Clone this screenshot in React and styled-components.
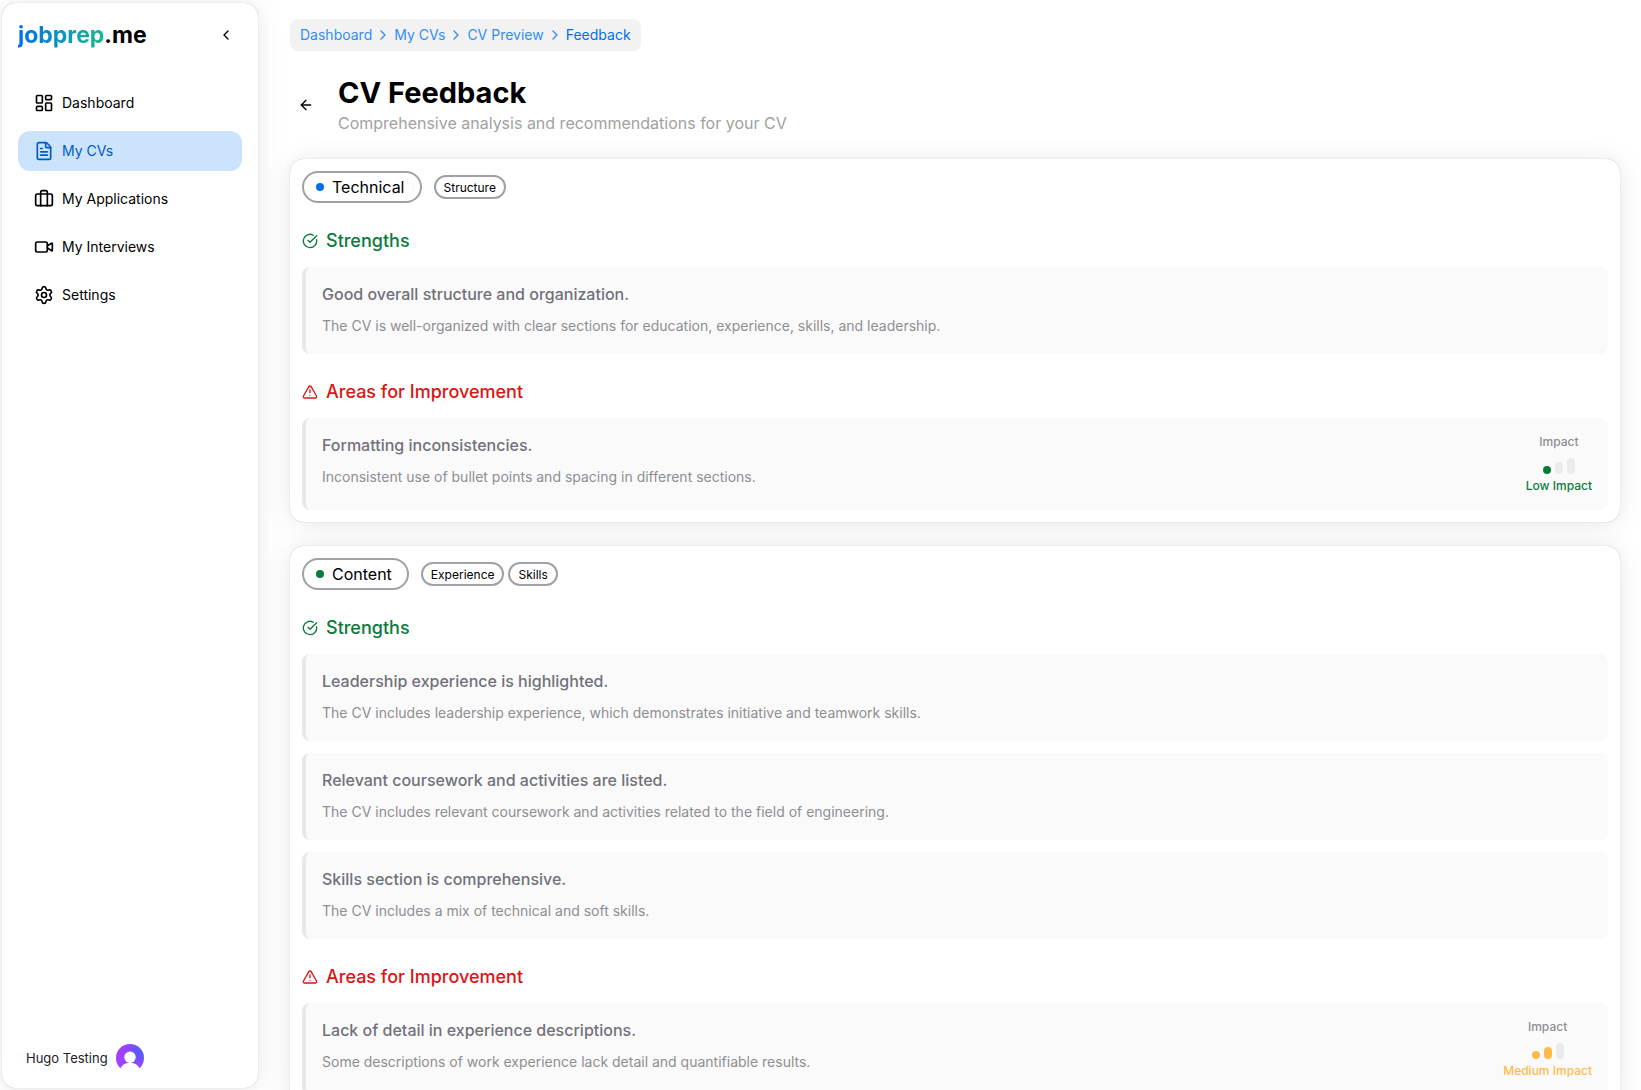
import React, { useState } from 'react'
import styled, { createGlobalStyle } from 'styled-components'
import {
    ArrowLeft,
    Briefcase,
    ChevronLeft,
    ChevronRight,
    CircleCheckBig,
    FileText,
    LayoutDashboard,
    Settings,
    TriangleAlert,
    Video,
} from 'lucide-react'

const navItems = [
    { label: 'Dashboard', icon: LayoutDashboard },
    { label: 'My CVs', icon: FileText },
    { label: 'My Applications', icon: Briefcase },
    { label: 'My Interviews', icon: Video },
    { label: 'Settings', icon: Settings },
]

const crumbs = ['Dashboard', 'My CVs', 'CV Preview', 'Feedback']

const impacts = {
    low: { label: 'Low Impact', level: 1, color: '#0b7a3b' },
    medium: { label: 'Medium Impact', level: 2, color: '#ffba4d' },
}

const feedback = [
    {
        category: 'Technical',
        dot: '#006fee',
        tags: ['Structure'],
        strengths: [
            {
                title: 'Good overall structure and organization.',
                text: 'The CV is well-organized with clear sections for education, experience, skills, and leadership.',
            },
        ],
        improvements: [
            {
                title: 'Formatting inconsistencies.',
                text: 'Inconsistent use of bullet points and spacing in different sections.',
                impact: 'low',
            },
        ],
    },
    {
        category: 'Content',
        dot: '#0b7a3b',
        tags: ['Experience', 'Skills'],
        strengths: [
            {
                title: 'Leadership experience is highlighted.',
                text: 'The CV includes leadership experience, which demonstrates initiative and teamwork skills.',
            },
            {
                title: 'Relevant coursework and activities are listed.',
                text: 'The CV includes relevant coursework and activities related to the field of engineering.',
            },
            {
                title: 'Skills section is comprehensive.',
                text: 'The CV includes a mix of technical and soft skills.',
            },
        ],
        improvements: [
            {
                title: 'Lack of detail in experience descriptions.',
                text: 'Some descriptions of work experience lack detail and quantifiable results.',
                impact: 'medium',
            },
        ],
    },
]

function Avatar() {
    return (
        <svg width="28" height="28" viewBox="0 0 28 28" aria-hidden="true">
            <defs>
                <radialGradient id="avatarFill" cx="0.85" cy="0.3" r="0.55">
                    <stop offset="0" stopColor="#4f5dff" />
                    <stop offset="1" stopColor="#a041ff" />
                </radialGradient>
            </defs>
            <circle cx="14" cy="14" r="14" fill="url(#avatarFill)" />
            <circle cx="14" cy="13.3" r="5.7" fill="#fff" />
            {/* shoulders run past the bottom edge and cut the disc open */}
            <circle cx="14" cy="30" r="11.3" fill="#fff" />
        </svg>
    )
}

function Sidebar() {
    const [active, setActive] = useState('My CVs')

    return (
        <SidebarContainer>
            <SidebarHeader>
                <Logo href="#"><span>jobprep</span>.me</Logo>
                <IconButton aria-label="Collapse sidebar">
                    <ChevronLeft size={16} />
                </IconButton>
            </SidebarHeader>
            <Nav>
                {navItems.map(({ label, icon: Icon }) => (
                    <NavLink
                        key={label}
                        href="#"
                        $active={label === active}
                        onClick={() => setActive(label)}
                    >
                        <Icon size={20} />
                        <span>{label}</span>
                    </NavLink>
                ))}
            </Nav>
            <UserButton>
                Hugo Testing
                <Avatar />
            </UserButton>
        </SidebarContainer>
    )
}

function Impact({ type }) {
    const { label, level, color } = impacts[type]

    return (
        <ImpactContainer>
            <ImpactLabel>Impact</ImpactLabel>
            <Bars>
                <Bar $height={8} $color={level > 0 && color} />
                <Bar $height={12} $color={level > 1 && color} />
                <Bar $height={16} $color={level > 2 && color} />
            </Bars>
            <ImpactLabel $color={color}>{label}</ImpactLabel>
        </ImpactContainer>
    )
}

function FeedbackItem({ item }) {
    return (
        <Item>
            <div>
                <ItemTitle>{item.title}</ItemTitle>
                <ItemText>{item.text}</ItemText>
            </div>
            {item.impact && <Impact type={item.impact} />}
        </Item>
    )
}

function FeedbackCard({ data }) {
    return (
        <Card>
            <CardHeader>
                <CategoryChip>
                    <Dot $color={data.dot} />
                    {data.category}
                </CategoryChip>
                <Tags>
                    {data.tags.map(tag => <Tag key={tag}>{tag}</Tag>)}
                </Tags>
            </CardHeader>
            <Group>
                <GroupTitle $color="#0b7a3b">
                    <CircleCheckBig size={16} />
                    Strengths
                </GroupTitle>
                {data.strengths.map(item => <FeedbackItem key={item.title} item={item} />)}
            </Group>
            <Group>
                <GroupTitle $color="#dc1414">
                    <TriangleAlert size={16} />
                    Areas for Improvement
                </GroupTitle>
                {data.improvements.map(item => <FeedbackItem key={item.title} item={item} />)}
            </Group>
        </Card>
    )
}

function App() {
    return (
        <>
            <GlobalStyle />
            <Layout>
                <Sidebar />
                <Main>
                    <Breadcrumbs aria-label="Breadcrumbs">
                        {crumbs.map((crumb, i) => (
                            <React.Fragment key={crumb}>
                                {i > 0 && <ChevronRight size={16} />}
                                <Crumb href="#" $current={i === crumbs.length - 1}>{crumb}</Crumb>
                            </React.Fragment>
                        ))}
                    </Breadcrumbs>
                    <PageHeader>
                        <IconButton aria-label="Go back">
                            <ArrowLeft size={16} />
                        </IconButton>
                        <div>
                            <Title>CV Feedback</Title>
                            <Subtitle>Comprehensive analysis and recommendations for your CV</Subtitle>
                        </div>
                    </PageHeader>
                    {feedback.map(data => <FeedbackCard key={data.category} data={data} />)}
                </Main>
            </Layout>
        </>
    )
}

export default App

const GlobalStyle = createGlobalStyle`
    *{
        box-sizing:border-box;
        margin:0;
        padding:0;
    }
    body{
        font-family:Inter, "Liberation Sans", sans-serif;
        color:#11181c;
        background-color:#fff;
    }
    button{
        font-family:inherit;
        color:inherit;
        border:none;
        background:transparent;
        cursor:pointer;
    }
    a{
        color:inherit;
        text-decoration:none;
    }
    svg{
        flex-shrink:0;
    }
`;

const panelShadow = '0 0 15px rgba(0,0,0,0.03), 0 2px 30px rgba(0,0,0,0.08), 0 0 1px rgba(0,0,0,0.3)'

const Layout = styled.div`
    display:flex;
    height:100vh;
    overflow:hidden;
`;
const SidebarContainer = styled.aside`
    display:flex;
    flex-direction:column;
    flex-shrink:0;
    width:256px;
    margin:3px 0 2px 2px;
    padding:16px;
    border-radius:14px;
    background-color:#fff;
    box-shadow:${panelShadow};
`;
const SidebarHeader = styled.div`
    display:flex;
    align-items:center;
    justify-content:space-between;
    height:32px;
`;
const Logo = styled.a`
    font-size:23px;
    line-height:32px;
    font-weight:700;
    color:#000;
    >span{
        color:transparent;
        background:linear-gradient(to right, #006fee, #17b890);
        background-clip:text;
    }
`;
const IconButton = styled.button`
    display:flex;
    align-items:center;
    justify-content:center;
    width:32px;
    height:32px;
    border-radius:8px;
    color:#000;
`;
const Nav = styled.nav`
    display:flex;
    flex-direction:column;
    gap:8px;
    flex:1;
    margin-top:32px;
`;
const NavLink = styled.a`
    display:flex;
    align-items:center;
    gap:8px;
    height:40px;
    padding:0 16px;
    border-radius:12px;
    font-size:14px;
    color:${props => props.$active ? '#005bc4' : '#000'};
    background-color:${props => props.$active ? '#cce3fd' : 'transparent'};
    >span{
        padding-bottom:2px;
    }
`;
const UserButton = styled.button`
    display:flex;
    align-items:center;
    align-self:flex-start;
    gap:8px;
    height:28px;
    padding:0 8px;
    font-size:13px;
    color:#212126;
`;

const Main = styled.main`
    display:flex;
    flex-direction:column;
    gap:24px;
    flex:1;
    min-width:0;
    padding:19px 21px 24px 32px;
    overflow-y:auto;
    scrollbar-width:none;
`;
const Breadcrumbs = styled.nav`
    display:flex;
    align-items:center;
    align-self:flex-start;
    flex-shrink:0;
    gap:3px;
    height:32px;
    padding:0 10px;
    border-radius:8px;
    font-size:14px;
    color:#338ef7;
    background-color:#f2f2f2;
`;
const Crumb = styled.a`
    padding-bottom:2px;
    color:${props => props.$current ? '#006fee' : '#338ef7'};
`;
const PageHeader = styled.header`
    display:flex;
    align-items:center;
    gap:16px;
`;
const Title = styled.h1`
    font-size:29px;
    line-height:36px;
    font-weight:700;
    color:#000;
`;
const Subtitle = styled.p`
    font-size:16px;
    line-height:24px;
    color:#a1a1a1;
`;
const Card = styled.section`
    display:flex;
    flex-direction:column;
    flex-shrink:0;
    gap:24px;
    padding:12px;
    border-radius:14px;
    background-color:#fff;
    box-shadow:${panelShadow};
`;
const CardHeader = styled.div`
    display:flex;
    align-items:center;
    gap:12px;
`;
const CategoryChip = styled.span`
    display:flex;
    align-items:center;
    gap:8px;
    height:32px;
    padding:0 15px 0 12px;
    border:2px solid #a0a0a6;
    border-radius:16px;
    font-size:16px;
    color:#000;
`;
const Dot = styled.i`
    width:8px;
    height:8px;
    border-radius:50%;
    background-color:${props => props.$color};
`;
const Tags = styled.div`
    display:flex;
    gap:4px;
`;
const Tag = styled.span`
    display:flex;
    align-items:center;
    height:24px;
    padding:0 8px;
    border:2px solid #a0a0a6;
    border-radius:12px;
    font-size:12px;
    color:#000;
`;
const Group = styled.div`
    display:flex;
    flex-direction:column;
    gap:12px;
`;
const GroupTitle = styled.h2`
    display:flex;
    align-items:center;
    gap:8px;
    font-size:18px;
    line-height:28px;
    font-weight:500;
    color:${props => props.$color};
`;
const Item = styled.article`
    display:flex;
    justify-content:space-between;
    min-height:87px;
    padding:16px;
    border-left:4px solid #e8e8e8;
    border-radius:8px;
    background-color:#fafafa;
`;
const ItemTitle = styled.h3`
    margin-bottom:9px;
    font-size:16px;
    line-height:22px;
    font-weight:500;
    color:#71717a;
`;
const ItemText = styled.p`
    font-size:14px;
    line-height:23px;
    color:#8e8e93;
`;
const ImpactContainer = styled.div`
    display:flex;
    flex-direction:column;
    align-items:center;
    gap:4px;
`;
const ImpactLabel = styled.span`
    font-size:12px;
    line-height:16px;
    font-weight:500;
    color:${props => props.$color || '#8e8e93'};
`;
const Bars = styled.div`
    display:flex;
    align-items:flex-end;
    gap:4px;
    margin-top:4px;
`;
const Bar = styled.i`
    width:8px;
    height:${props => props.$height}px;
    border-radius:4px;
    background-color:${props => props.$color || '#ebebeb'};
`;
